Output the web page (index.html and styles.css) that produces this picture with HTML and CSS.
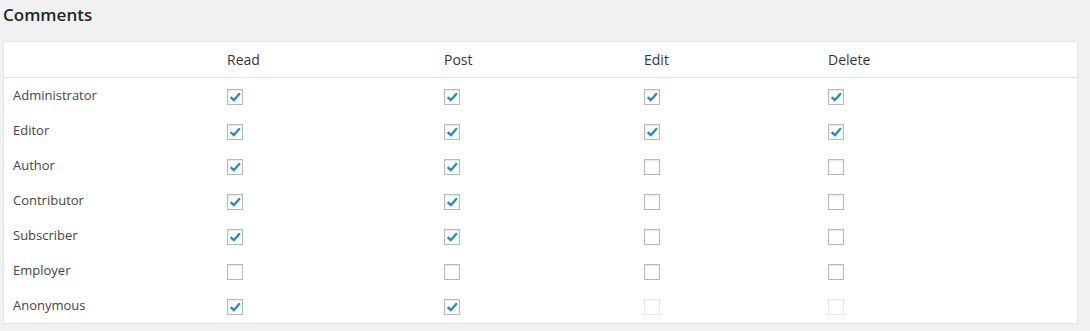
FILE: index.html
```html
<!DOCTYPE html>
<html>
<head>
<meta charset="utf-8">
<link rel="stylesheet" href="styles.css">
</head>
<body>
<div class="wrap">
  <h2 class="title">Comments</h2>
  <table class="caps">
    <colgroup>
      <col class="c-role"><col class="c-read"><col class="c-post"><col class="c-edit"><col class="c-del">
    </colgroup>
    <thead>
      <tr><th></th><th>Read</th><th>Post</th><th>Edit</th><th>Delete</th></tr>
    </thead>
    <tbody>
      <tr><td class="role">Administrator</td>
        <td><span class="cb on"><svg viewBox="0 0 16 16"><path d="M3 8.2 L6.6 11.6 L13.6 3.6"/></svg></span></td>
        <td><span class="cb on"><svg viewBox="0 0 16 16"><path d="M3 8.2 L6.6 11.6 L13.6 3.6"/></svg></span></td>
        <td><span class="cb on"><svg viewBox="0 0 16 16"><path d="M3 8.2 L6.6 11.6 L13.6 3.6"/></svg></span></td>
        <td><span class="cb on"><svg viewBox="0 0 16 16"><path d="M3 8.2 L6.6 11.6 L13.6 3.6"/></svg></span></td></tr>
      <tr><td class="role">Editor</td>
        <td><span class="cb on"><svg viewBox="0 0 16 16"><path d="M3 8.2 L6.6 11.6 L13.6 3.6"/></svg></span></td>
        <td><span class="cb on"><svg viewBox="0 0 16 16"><path d="M3 8.2 L6.6 11.6 L13.6 3.6"/></svg></span></td>
        <td><span class="cb on"><svg viewBox="0 0 16 16"><path d="M3 8.2 L6.6 11.6 L13.6 3.6"/></svg></span></td>
        <td><span class="cb on"><svg viewBox="0 0 16 16"><path d="M3 8.2 L6.6 11.6 L13.6 3.6"/></svg></span></td></tr>
      <tr><td class="role">Author</td>
        <td><span class="cb on"><svg viewBox="0 0 16 16"><path d="M3 8.2 L6.6 11.6 L13.6 3.6"/></svg></span></td>
        <td><span class="cb on"><svg viewBox="0 0 16 16"><path d="M3 8.2 L6.6 11.6 L13.6 3.6"/></svg></span></td>
        <td><span class="cb"></span></td>
        <td><span class="cb"></span></td></tr>
      <tr><td class="role">Contributor</td>
        <td><span class="cb on"><svg viewBox="0 0 16 16"><path d="M3 8.2 L6.6 11.6 L13.6 3.6"/></svg></span></td>
        <td><span class="cb on"><svg viewBox="0 0 16 16"><path d="M3 8.2 L6.6 11.6 L13.6 3.6"/></svg></span></td>
        <td><span class="cb"></span></td>
        <td><span class="cb"></span></td></tr>
      <tr><td class="role">Subscriber</td>
        <td><span class="cb on"><svg viewBox="0 0 16 16"><path d="M3 8.2 L6.6 11.6 L13.6 3.6"/></svg></span></td>
        <td><span class="cb on"><svg viewBox="0 0 16 16"><path d="M3 8.2 L6.6 11.6 L13.6 3.6"/></svg></span></td>
        <td><span class="cb"></span></td>
        <td><span class="cb"></span></td></tr>
      <tr><td class="role">Employer</td>
        <td><span class="cb"></span></td>
        <td><span class="cb"></span></td>
        <td><span class="cb"></span></td>
        <td><span class="cb"></span></td></tr>
      <tr><td class="role">Anonymous</td>
        <td><span class="cb on"><svg viewBox="0 0 16 16"><path d="M3 8.2 L6.6 11.6 L13.6 3.6"/></svg></span></td>
        <td><span class="cb on"><svg viewBox="0 0 16 16"><path d="M3 8.2 L6.6 11.6 L13.6 3.6"/></svg></span></td>
        <td><span class="cb off"></span></td>
        <td><span class="cb off"></span></td></tr>
    </tbody>
  </table>
</div>
</body>
</html>
```

FILE: styles.css
```css
html, body {
  margin: 0;
  padding: 0;
  background: #f1f1f1;
}
body {
  font-family: "Open Sans", "Liberation Sans", sans-serif;
  color: #444;
}
.wrap {
  padding: 0 0 0 3px;
}
.title {
  margin: 0;
  padding-top: 4px;
  height: 37px;
  font-size: 17px;
  line-height: 22px;
  font-weight: 600;
  color: #23282d;
}
.caps {
  width: 1075px;
  table-layout: fixed;
  border-collapse: separate;
  border-spacing: 0;
  background: #fff;
  border: 1px solid #e5e5e5;
  box-shadow: 0 1px 1px rgba(0, 0, 0, 0.04);
}
.c-role { width: 213px; }
.c-read { width: 217px; }
.c-post { width: 200px; }
.c-edit { width: 184px; }
.c-del { width: 259px; }
.caps th {
  text-align: left;
  font-weight: 400;
  font-size: 14px;
  color: #32373c;
  height: 35px;
  padding: 0 10px;
  border-bottom: 1px solid #e1e1e1;
  line-height: 20px;
}
.caps td {
  font-size: 13px;
  color: #444;
  height: 35px;
  padding: 0 10px;
  line-height: 18px;
  vertical-align: middle;
}
.caps td.role {
  height: 33px;
  padding: 0 10px 2px 9px;
}
.cb {
  display: block;
  box-sizing: border-box;
  width: 16px;
  height: 16px;
  border: 1px solid #b4b9be;
  background: #fff;
  box-shadow: inset 0 1px 2px rgba(0, 0, 0, 0.1);
  position: relative;
  top: 1px;
}
.cb svg {
  display: block;
  width: 14px;
  height: 14px;
  fill: none;
  stroke: #1e8cbe;
  stroke-width: 2.6;
  stroke-linecap: butt;
  stroke-linejoin: miter;
}
.cb.off {
  border-color: #e6e7e8;
  box-shadow: inset 0 1px 2px rgba(0, 0, 0, 0.03);
}
```
